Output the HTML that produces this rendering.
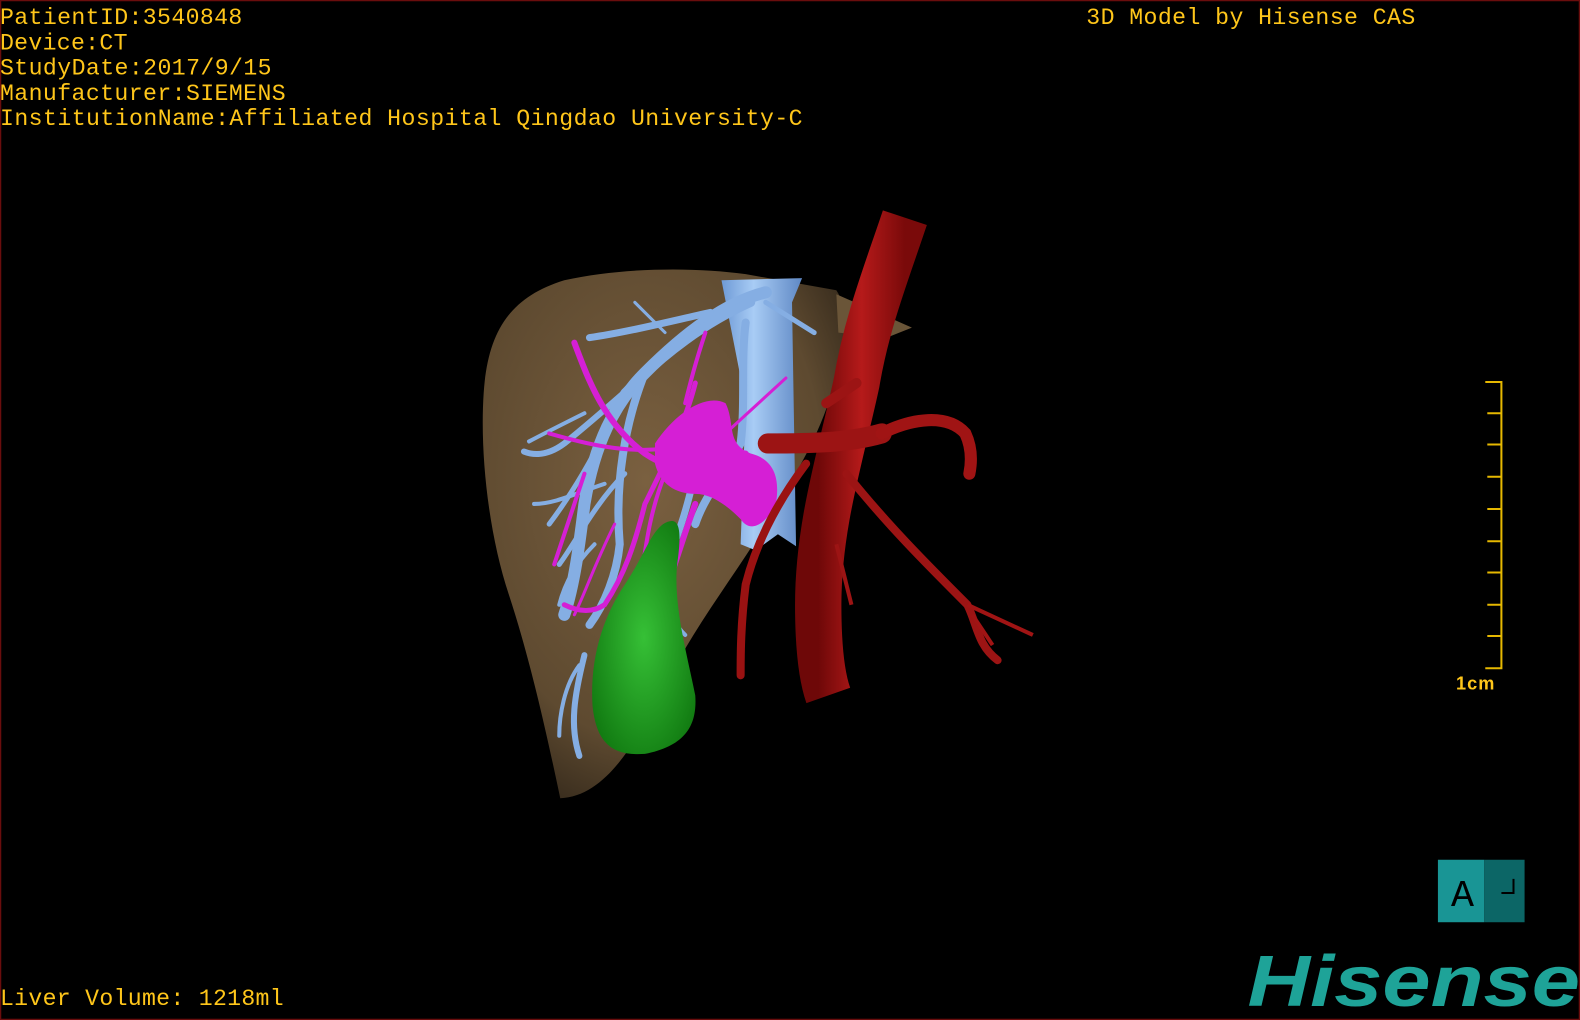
<!DOCTYPE html>
<html><head><meta charset="utf-8"><style>
html,body{margin:0;padding:0;background:#000;width:1580px;height:1020px;overflow:hidden}
svg{display:block}
.t{font-family:"Liberation Mono",monospace;font-size:23px;fill:#ffc61a;letter-spacing:0.5px}
</style></head><body>
<svg width="1580" height="1020" viewBox="0 0 1568 1012" preserveAspectRatio="none">
<defs>
<radialGradient id="lv" cx="0.45" cy="0.4" r="0.7"><stop offset="0" stop-color="#7a6040"/><stop offset="0.7" stop-color="#5e4a30"/><stop offset="1" stop-color="#2e2418"/></radialGradient>
<linearGradient id="ivc" x1="0" x2="1"><stop offset="0" stop-color="#6e9ad6"/><stop offset="0.4" stop-color="#a8ccf5"/><stop offset="1" stop-color="#5f88c4"/></linearGradient>
<radialGradient id="gb" cx="0.5" cy="0.5" r="0.6"><stop offset="0" stop-color="#36c036"/><stop offset="1" stop-color="#117a11"/></radialGradient>
<linearGradient id="ao" x1="0" x2="1"><stop offset="0" stop-color="#6e0808"/><stop offset="0.5" stop-color="#b51a1a"/><stop offset="1" stop-color="#7a0a0a"/></linearGradient>
</defs>
<rect x="0.5" y="0.5" width="1567" height="1011" fill="#000" stroke="#6a0d0d" stroke-width="1.5"/>
<path d="M556,792 C545,740 528,660 505,590 C485,530 476,450 480,390 C484,330 505,295 560,278 C620,265 690,265 740,272 L830,288 C845,310 838,350 828,380 C815,430 790,470 760,520 C730,570 690,620 660,680 C630,740 600,790 556,792Z" fill="url(#lv)"/>
<path d="M830,292 L905,325 L880,335 L832,330Z" fill="#6a5538"/>
<path d="M716,278 L796,276 L786,300 L790,542 L772,530 L750,546 L735,540 L740,400 Z" fill="url(#ivc)"/>
<g fill="none" stroke="#85aee3" stroke-linecap="round">
<path d="M760,290 C720,300 680,330 640,370 C610,400 590,440 580,500 C575,540 570,580 560,610" stroke-width="12"/>
<path d="M745,300 C700,320 660,350 620,390" stroke-width="9"/>
<path d="M705,310 C660,320 620,330 585,335" stroke-width="7"/>
<path d="M690,330 C650,360 610,400 560,440 C540,455 525,450 520,448" stroke-width="6"/>
<path d="M740,320 C735,360 740,400 735,440 C720,470 700,490 690,520" stroke-width="8"/>
<path d="M640,370 C620,420 610,480 615,540 C612,570 600,600 585,620" stroke-width="8"/>
<path d="M600,430 C580,470 560,500 545,520" stroke-width="5"/>
<path d="M620,470 C590,500 570,540 555,560" stroke-width="5"/>
<path d="M700,420 C690,470 680,520 660,560" stroke-width="7"/>
<path d="M580,410 C560,420 540,430 525,438" stroke-width="4"/>
<path d="M760,300 L808,330" stroke-width="5"/>
<path d="M630,300 C640,310 650,320 660,330" stroke-width="3"/>
<path d="M580,650 C570,690 565,720 575,750" stroke-width="6"/>
<path d="M575,660 C560,680 555,710 555,730" stroke-width="4"/>
<path d="M660,590 C665,610 670,620 680,630" stroke-width="4"/>
<path d="M600,480 C570,490 550,500 530,500" stroke-width="4"/>
<path d="M590,540 C570,560 560,580 555,600" stroke-width="4"/>
</g>
<g fill="none" stroke="#d51fd5" stroke-linecap="round">
<path d="M570,340 C585,380 600,420 640,450 C670,470 700,470 740,450" stroke-width="6"/>
<path d="M690,380 C680,420 660,460 640,500 C630,540 620,570 600,600 C585,610 570,605 560,600" stroke-width="5"/>
<path d="M660,470 C640,520 640,560 630,610" stroke-width="4"/>
<path d="M545,430 C580,440 620,450 660,445" stroke-width="4"/>
<path d="M580,470 C570,500 560,530 550,560" stroke-width="4"/>
<path d="M700,330 C690,360 685,380 680,400" stroke-width="4"/>
<path d="M690,500 C675,540 665,580 650,610" stroke-width="6"/>
<path d="M720,430 L780,375" stroke-width="3"/>
<path d="M610,520 C590,560 580,590 570,610" stroke-width="3"/>
</g>
<path d="M650,440 C670,410 700,390 720,400 C730,420 720,440 745,450 C765,455 775,470 770,500 C760,520 745,530 735,515 C720,500 705,490 690,490 C670,490 655,480 650,460Z" fill="#d51fd5"/>
<path d="M658,520 C672,512 678,518 672,560 C668,600 682,650 690,690 C692,720 680,740 640,748 C610,750 592,740 588,700 C585,650 600,610 620,580 C640,550 645,530 658,520Z" fill="url(#gb)"/>
<g fill="none">
<path d="M898,216 C880,270 860,320 850,380 C835,450 812,520 812,600 C812,640 815,670 822,690" stroke="url(#ao)" stroke-width="46"/>
<path d="M762,440 C800,440 840,440 875,430" stroke="#9c1414" stroke-width="20" stroke-linecap="round"/>
<path d="M875,430 C905,415 940,410 958,430 C965,445 964,460 962,470" stroke="#a01414" stroke-width="12" stroke-linecap="round"/>
<path d="M840,470 C880,520 920,560 960,600 C970,620 970,640 990,655" stroke="#9c1414" stroke-width="8" stroke-linecap="round"/>
<path d="M960,600 L1025,630 M965,610 L985,640" stroke="#a01414" stroke-width="4"/>
<path d="M800,460 C770,500 750,540 740,580 C735,620 735,650 735,670" stroke="#9a1212" stroke-width="8" stroke-linecap="round"/>
<path d="M820,400 L850,380" stroke="#9c1414" stroke-width="10" stroke-linecap="round"/>
<path d="M830,540 L845,600" stroke="#9c1414" stroke-width="4"/>
</g>
<text class="t" x="0" y="24" textLength="241">PatientID:3540848</text>
<text class="t" x="0" y="49" textLength="127">Device:CT</text>
<text class="t" x="0" y="74" textLength="270">StudyDate:2017/9/15</text>
<text class="t" x="0" y="99" textLength="284">Manufacturer:SIEMENS</text>
<text class="t" x="0" y="124" textLength="797">InstitutionName:Affiliated Hospital Qingdao University-C</text>
<text class="t" x="1078" y="24" textLength="327">3D Model by Hisense CAS</text>
<text class="t" x="0" y="997" textLength="282">Liver Volume: 1218ml</text>
<g stroke="#e6b800" stroke-width="2" fill="none">
<path d="M1474,379 H1490 V663 H1474"/>
<path d="M1476,410 H1490 M1476,441 H1490 M1476,473 H1490 M1476,505 H1490 M1476,537 H1490 M1476,568 H1490 M1476,600 H1490 M1476,631 H1490"/>
</g>
<text x="1445" y="684" font-family="Liberation Sans,sans-serif" font-size="18" fill="#ffc61a" font-weight="bold" letter-spacing="1">1cm</text>
<rect x="1427" y="853" width="46" height="62" fill="#199595"/>
<rect x="1473" y="853" width="40" height="62" fill="#0c6666"/>
<text x="1440" y="899" font-family="Liberation Mono,monospace" font-size="38" fill="#000">A</text>
<path d="M1490,886 H1502 V872" stroke="#000" stroke-width="2" fill="none"/>
<text x="1238" y="998" font-family="Liberation Sans,sans-serif" font-size="72" font-weight="bold" font-style="italic" fill="#1ea398" textLength="330" lengthAdjust="spacingAndGlyphs">Hisense</text>
</svg>
</body></html>
